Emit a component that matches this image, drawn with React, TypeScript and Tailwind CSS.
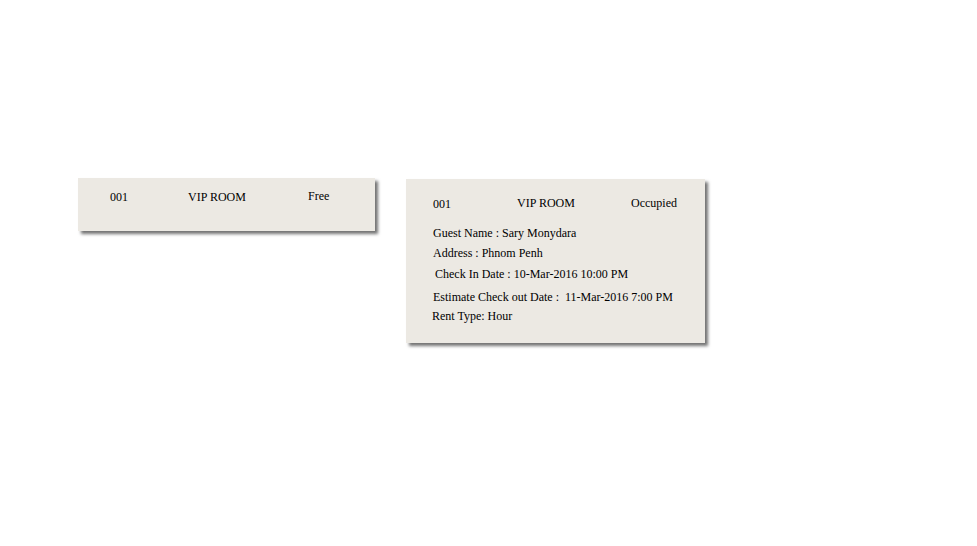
import React from "react";

export default function App() {
  const font = { fontFamily: '"Liberation Serif", "Times New Roman", serif' };
  return (
    <div className="w-[977px] h-[546px] bg-white text-black text-[12px] leading-[14px]" style={font}>
      <div className="flex items-start pt-[178px] pl-[78px] gap-[31px]">
        {/* Card 1 */}
        <div className="w-[297px] h-[53px] bg-[#ece9e3] shadow-[3px_3px_3px_rgba(0,0,0,0.55)] pt-[12px] pl-[32px]">
          <div className="flex">
            <span className="w-[78px]">001</span>
            <span className="w-[120px]">VIP ROOM</span>
            <span className="-mt-[1px]">Free</span>
          </div>
        </div>
        {/* Card 2 */}
        <div className="mt-px w-[299px] h-[164px] bg-[#ece9e3] shadow-[3px_3px_3px_rgba(0,0,0,0.55)] pt-[18px] pl-[27px]">
          <div className="flex">
            <span className="w-[84px]">001</span>
            <span className="w-[114px] -mt-[1px]">VIP ROOM</span>
            <span className="-mt-[1px]">Occupied</span>
          </div>
          <div className="mt-[15px]">Guest Name : Sary Monydara</div>
          <div className="mt-[6px]">Address : Phnom Penh</div>
          <div className="mt-[7px] ml-[2px]">Check In Date : 10-Mar-2016 10:00 PM</div>
          <div className="mt-[9px]">Estimate Check out Date :&nbsp; 11-Mar-2016 7:00 PM</div>
          <div className="mt-[5px] -ml-[1px]">Rent Type: Hour</div>
        </div>
      </div>
    </div>
  );
}
